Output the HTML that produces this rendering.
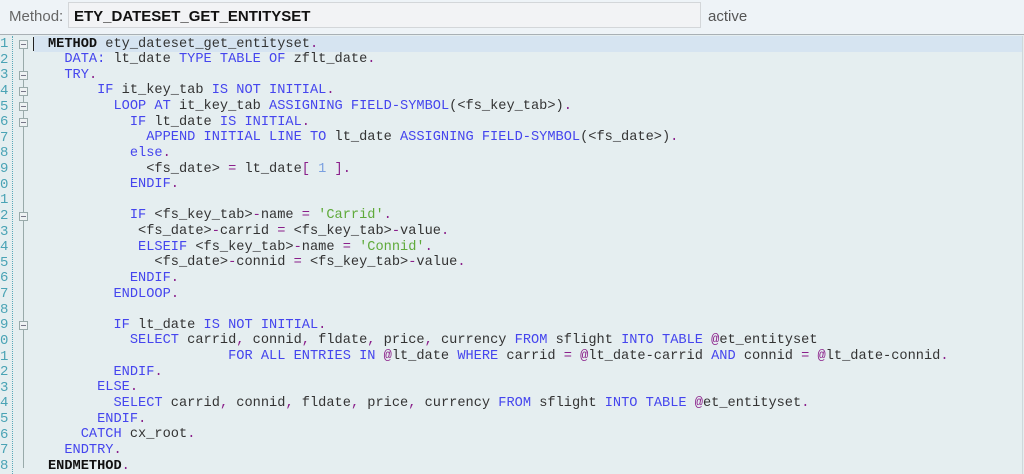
<!DOCTYPE html>
<html><head><meta charset="utf-8">
<style>
html,body{margin:0;padding:0;width:1024px;height:474px;overflow:hidden;background:#e5eef0;}
#hdr{position:absolute;left:0;top:0;width:1024px;height:34px;background:#eef3f7;border-bottom:1px solid #a9b0b5;}
#lbl{position:absolute;left:9px;top:8px;font:15px "Liberation Sans",sans-serif;color:#666;}
#fld{position:absolute;left:68px;top:2px;width:633px;height:26px;background:#f2f3f5;border:1px solid #d3d6d9;box-sizing:border-box;font:bold 15px "Liberation Sans",sans-serif;color:#111;padding:5px 0 0 5px;}
#act{position:absolute;left:708px;top:8px;font:15px "Liberation Sans",sans-serif;color:#555;}
#code{position:absolute;left:0;top:36px;width:1022px;height:438px;background:#e5eef0;border-right:1px solid #cfd8da;}
#hl{position:absolute;left:34px;top:0;right:0;height:16px;background:#d6e4f1;}
#cur{position:absolute;left:33px;top:1px;width:1px;height:14px;background:#222;}
#dots{position:absolute;left:12px;top:0;height:438px;border-left:1px dotted #5aa8b8;}
.ln{position:absolute;left:0;width:10px;font:14px "Liberation Mono",monospace;color:#4aa3b5;text-align:left;}
.l{position:absolute;left:48px;font:13.65px "Liberation Mono",monospace;white-space:pre;color:#333;}
.k{color:#4545ee}.b{color:#111;font-weight:bold}.p{color:#8a1f8a}.s{color:#5faa3a}.n{color:#7aa0e0}
.fb{position:absolute;left:19px;width:7px;height:7px;border:1px solid #9aa;background:#eef2f3;}
.fb:after{content:"";position:absolute;left:1px;top:3px;width:5px;height:1px;background:#778;}
.vl{position:absolute;left:23px;width:1px;background:#9aa;}
</style></head><body>
<div id="hdr"><div id="lbl">Method:</div><div id="fld">ETY_DATESET_GET_ENTITYSET</div><div id="act">active</div></div>
<div id="code">
<div id="hl"></div><div id="cur"></div><div id="dots"></div>
<div class="vl" style="top:12px;height:420px"></div>
<div class="fb" style="top:4px"></div>
<div class="fb" style="top:35px"></div>
<div class="fb" style="top:51px"></div>
<div class="fb" style="top:66px"></div>
<div class="fb" style="top:82px"></div>
<div class="fb" style="top:176px"></div>
<div class="fb" style="top:285px"></div>
<div id="lines"></div>
</div>
<script>
var L=[
'<span class="b">METHOD</span> ety_dateset_get_entityset<span class="p">.</span>',
'  <span class="k">DATA:</span> lt_date <span class="k">TYPE TABLE OF</span> zflt_date<span class="p">.</span>',
'  <span class="k">TRY</span><span class="p">.</span>',
'      <span class="k">IF</span> it_key_tab <span class="k">IS NOT INITIAL</span><span class="p">.</span>',
'        <span class="k">LOOP AT</span> it_key_tab <span class="k">ASSIGNING FIELD-SYMBOL</span>(&lt;fs_key_tab&gt;)<span class="p">.</span>',
'          <span class="k">IF</span> lt_date <span class="k">IS INITIAL</span><span class="p">.</span>',
'            <span class="k">APPEND INITIAL LINE TO</span> lt_date <span class="k">ASSIGNING FIELD-SYMBOL</span>(&lt;fs_date&gt;)<span class="p">.</span>',
'          <span class="k">else</span><span class="p">.</span>',
'            &lt;fs_date&gt; <span class="p">=</span> lt_date<span class="p">[</span> <span class="n">1</span> <span class="p">].</span>',
'          <span class="k">ENDIF</span><span class="p">.</span>',
'',
'          <span class="k">IF</span> &lt;fs_key_tab&gt;<span class="p">-</span>name <span class="p">=</span> <span class="s">\'Carrid\'</span><span class="p">.</span>',
'           &lt;fs_date&gt;<span class="p">-</span>carrid <span class="p">=</span> &lt;fs_key_tab&gt;<span class="p">-</span>value<span class="p">.</span>',
'           <span class="k">ELSEIF</span> &lt;fs_key_tab&gt;<span class="p">-</span>name <span class="p">=</span> <span class="s">\'Connid\'</span><span class="p">.</span>',
'             &lt;fs_date&gt;<span class="p">-</span>connid <span class="p">=</span> &lt;fs_key_tab&gt;<span class="p">-</span>value<span class="p">.</span>',
'          <span class="k">ENDIF</span><span class="p">.</span>',
'        <span class="k">ENDLOOP</span><span class="p">.</span>',
'',
'        <span class="k">IF</span> lt_date <span class="k">IS NOT INITIAL</span><span class="p">.</span>',
'          <span class="k">SELECT</span> carrid<span class="p">,</span> connid<span class="p">,</span> fldate<span class="p">,</span> price<span class="p">,</span> currency <span class="k">FROM</span> sflight <span class="k">INTO TABLE</span> <span class="p">@</span>et_entityset',
'                      <span class="k">FOR ALL ENTRIES IN</span> <span class="p">@</span>lt_date <span class="k">WHERE</span> carrid <span class="p">=</span> <span class="p">@</span>lt_date-carrid <span class="k">AND</span> connid <span class="p">=</span> <span class="p">@</span>lt_date-connid<span class="p">.</span>',
'        <span class="k">ENDIF</span><span class="p">.</span>',
'      <span class="k">ELSE</span><span class="p">.</span>',
'        <span class="k">SELECT</span> carrid<span class="p">,</span> connid<span class="p">,</span> fldate<span class="p">,</span> price<span class="p">,</span> currency <span class="k">FROM</span> sflight <span class="k">INTO TABLE</span> <span class="p">@</span>et_entityset<span class="p">.</span>',
'      <span class="k">ENDIF</span><span class="p">.</span>',
'    <span class="k">CATCH</span> cx_root<span class="p">.</span>',
'  <span class="k">ENDTRY</span><span class="p">.</span>',
'<span class="b">ENDMETHOD</span><span class="p">.</span>'
];
var h='';
for(var i=0;i<L.length;i++){var t=(i*15.63).toFixed(2);
h+='<div class="ln" style="top:'+t+'px">'+((i+1)%10)+'</div><div class="l" style="top:'+(i*15.63+0.5).toFixed(2)+'px">'+L[i]+'</div>';}
document.getElementById('lines').innerHTML=h;
</script>
</body></html>
